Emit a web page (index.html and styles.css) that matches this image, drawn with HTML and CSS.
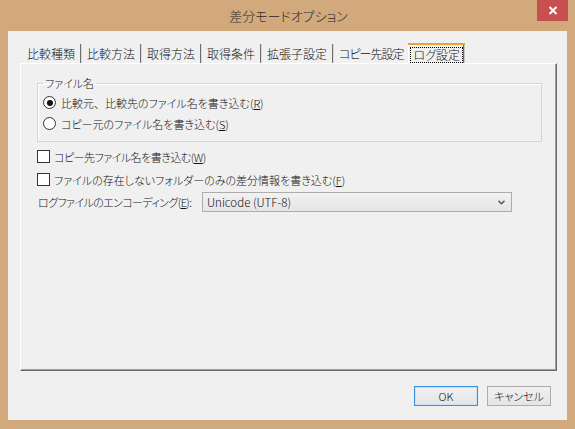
FILE: index.html
```html
<!DOCTYPE html>
<html lang="ja">
<head>
<meta charset="utf-8">
<title>差分モードオプション</title>
<link rel="stylesheet" href="styles.css">
</head>
<body>
<div class="window">
  <div class="titlebar">
    <div class="title">差分モードオプション</div>
    <div class="close">
      <svg width="10" height="9" viewBox="0 0 10 9"><path d="M1.5 1 L8.5 8 M8.5 1 L1.5 8" stroke="#fff" stroke-width="2" fill="none"/></svg>
    </div>
  </div>
  <div class="client">
    <div class="tabs">
      <span class="tab sep">比較種類</span>
      <span class="tab sep">比較方法</span>
      <span class="tab sep">取得方法</span>
      <span class="tab sep">取得条件</span>
      <span class="tab sep">拡張子設定</span>
      <span class="tab tight">コピー先設定</span>
      <span class="tab active"><span class="focus">ログ設定</span></span>
    </div>
    <div class="panel">
      <fieldset class="group">
        <legend>ファイル名</legend>
        <div class="row"><span class="radio on"></span><span>比較元<span class="full">、</span>比較先のファイル名を書き込む(<u>R</u>)</span></div>
        <div class="row"><span class="radio"></span><span>コピー元のファイル名を書き込む(<u>S</u>)</span></div>
      </fieldset>
      <div class="row check-row first"><span class="check"></span><span class="narrow">コピー先ファイル名を書き込む(<u>W</u>)</span></div>
      <div class="row check-row"><span class="check"></span><span>ファイルの存在しないフォルダーのみの差分情報を書き込む(<u>F</u>)</span></div>
      <div class="enc-row">
        <span class="enc-label">ログファイルのエンコーディング(<u>E</u>):</span>
        <div class="combo">
          <span class="combo-text">Unicode (UTF-8)</span>
          <svg class="arrow" width="7" height="5" viewBox="0 0 7 5"><path d="M0.5 0.8 L3.5 3.8 L6.5 0.8" stroke="#555" stroke-width="1.5" fill="none"/></svg>
        </div>
      </div>
    </div>
    <div class="buttons">
      <div class="btn default">OK</div>
      <div class="btn">キャンセル</div>
    </div>
  </div>
</div>
</body>
</html>
```

FILE: styles.css
```css
* { box-sizing: border-box; }
html, body { margin: 0; padding: 0; }
body {
  width: 575px;
  height: 429px;
  overflow: hidden;
  background: #d2a97d;
  font-family: "Noto Sans CJK JP", "Noto Sans", sans-serif;
  font-size: 11px;
  font-weight: 300;
  font-feature-settings: "palt";
  color: #111;
}
.window {
  width: 575px;
  height: 429px;
  background: #d2a97d;
  display: flex;
  flex-direction: column;
}
.titlebar {
  height: 31px;
  display: grid;
  grid-template-columns: 1fr auto 1fr;
}
.title {
  grid-column: 2;
  font-size: 13px;
  line-height: 31px;
  color: #2b2b2b;
  padding-left: 2px;
}
.close {
  grid-column: 3;
  justify-self: end;
  align-self: start;
  width: 31px;
  height: 21px;
  margin-right: 7px;
  background: #c74f4f;
  display: flex;
  align-items: center;
  justify-content: center;
}
.client {
  margin: 0 8px 9px 8px;
  height: 389px;
  background: #f0f0f0;
  display: flex;
  flex-direction: column;
}
.tabs {
  margin-top: 12px;
  padding-left: 14px;
  height: 20px;
  display: flex;
  align-items: stretch;
  font-size: 12px;
}
.tab {
  padding: 0 5px;
  line-height: 19px;
  height: 19px;
  margin-top: 1px;
  white-space: nowrap;
}
.tab.sep {
  box-shadow: inset -1px 0 #d8d8d8, inset -2px 0 #6e6e6e;
  padding-right: 7px;
}
.tab.tight {
  letter-spacing: -1px;
}
.tab.active {
  margin-top: 0;
  height: 20px;
  padding: 2px 2px 1px 2px;
  border-top: 2px solid #e6a23a;
  box-shadow: inset 1px 0 #ffffff, inset -1px 0 #c8c8c8, inset -2px 0 #6e6e6e;
  display: flex;
}
.focus {
  outline: 1px dotted #000;
  outline-offset: -1px;
  padding: 0 3px;
  line-height: 15px;
  height: 16px;
}
.panel {
  margin-left: 12px;
  width: 537px;
  height: 308px;
  border-top: 1px solid #ffffff;
  border-left: 1px solid #ffffff;
  border-right: 1px solid #696969;
  border-bottom: 1px solid #696969;
  box-shadow: inset -1px -1px #a0a0a0;
  display: flex;
  flex-direction: column;
}
.group {
  margin: 13px 0 0 16px;
  width: 505px;
  padding: 2px 0 7px 5px;
  border: 1px solid #d5d5d5;
  box-shadow: inset 1px 1px #fff;
  min-width: 0;
}
.group legend {
  padding: 0 2px;
  line-height: 13px;
}
.row {
  height: 21px;
  display: flex;
  align-items: center;
  white-space: nowrap;
}
.full { font-feature-settings: normal; }
.radio {
  width: 13px;
  height: 13px;
  border: 1px solid #333;
  border-radius: 50%;
  background: #fff;
  margin-right: 5px;
  display: flex;
  align-items: center;
  justify-content: center;
  flex: none;
}
.radio.on::after {
  content: "";
  width: 6px;
  height: 6px;
  border-radius: 50%;
  background: #111;
}
.check-row {
  margin-left: 16px;
  margin-top: 2px;
}
.check-row.first { margin-top: 4px; }
.narrow { letter-spacing: -0.5px; }
.check {
  width: 13px;
  height: 13px;
  border: 1px solid #333;
  background: #fff;
  margin-right: 4px;
  flex: none;
}
.enc-row {
  margin: 2px 0 0 17px;
  display: flex;
  align-items: center;
  height: 20px;
}
.enc-label {
  width: 164px;
  white-space: nowrap;
  letter-spacing: -0.6px;
  overflow: hidden;
}
.combo {
  width: 310px;
  height: 20px;
  border: 1px solid #acacac;
  background: linear-gradient(#f2f2f2, #e5e5e5);
  display: flex;
  align-items: center;
  justify-content: space-between;
  padding: 0 6px 0 4px;
}
.combo-text { font-size: 11.5px; }
.buttons {
  margin-top: 15px;
  display: flex;
  justify-content: flex-end;
  gap: 9px;
  padding-right: 16px;
}
.btn {
  width: 64px;
  height: 20px;
  border: 1px solid #acacac;
  background: linear-gradient(#f0f0f0, #e5e5e5);
  text-align: center;
  line-height: 18px;
}
.btn.default {
  border-color: #3c8fe0;
  box-shadow: inset 0 0 0 1px #c9e2fa;
}
```
